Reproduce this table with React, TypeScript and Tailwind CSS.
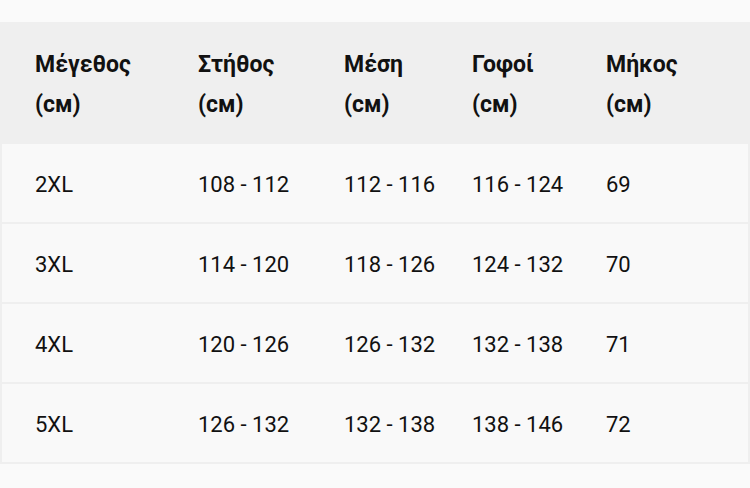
import React from "react";

const rows = [
  ["2XL", "108 - 112", "112 - 116", "116 - 124", "69"],
  ["3XL", "114 - 120", "118 - 126", "124 - 132", "70"],
  ["4XL", "120 - 126", "126 - 132", "132 - 138", "71"],
  ["5XL", "126 - 132", "132 - 138", "138 - 146", "72"],
];

const heads = ["Μέγεθος", "Στήθος", "Μέση", "Γοφοί", "Μήκος"];

export default function App() {
  return (
    <div
      className="w-[750px] h-[488px] bg-[#fafafa] pt-[22px] overflow-hidden"
      style={{ fontFamily: "Roboto, 'Noto Sans', sans-serif" }}
    >
      <div className="grid grid-cols-[163px_146px_128px_134px_1fr] pl-[35px] pt-[4px] bg-[#efefef] h-[122px] items-center text-[23px] font-bold text-[#111] leading-[40px]">
        {heads.map((h) => (
          <div key={h}>
            <div>{h}</div>
            <div>(см)</div>
          </div>
        ))}
      </div>
      {rows.map((r) => (
        <div
          key={r[0]}
          className="grid grid-cols-[163px_146px_128px_134px_1fr] pl-[33px] pt-[3px] h-[80px] border-x-2 border-b-2 border-[#efefef] bg-[#f9f9f9] items-center text-[22px] text-[#111]"
        >
          {r.map((c, i) => (
            <div key={i}>{c}</div>
          ))}
        </div>
      ))}
    </div>
  );
}
